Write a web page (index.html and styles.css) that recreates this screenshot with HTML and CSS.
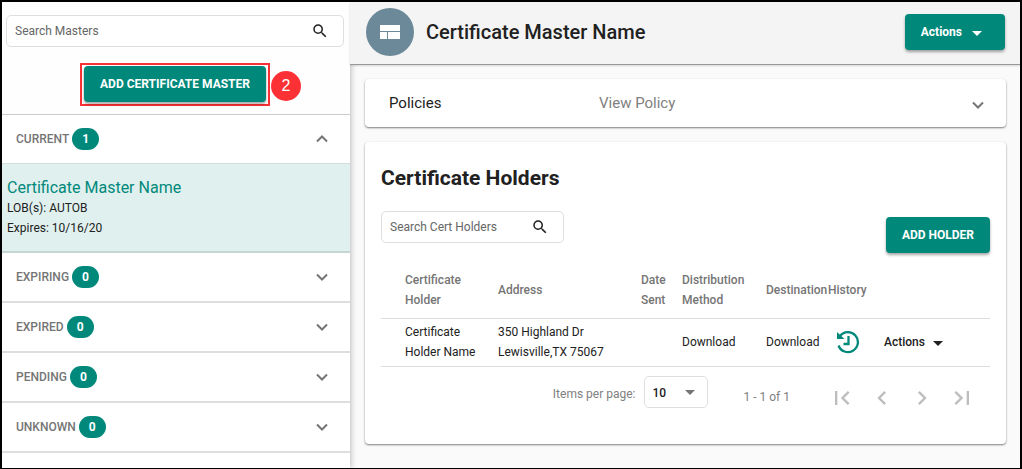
FILE: index.html
```html
<!DOCTYPE html>
<html lang="en">
<head>
<meta charset="utf-8">
<meta name="viewport" content="width=device-width, initial-scale=1">
<title>Certificate Master Name</title>
<link rel="stylesheet" href="styles.css">
</head>
<body>
<div class="app">
  <aside class="sidebar">
    <div class="sidebar-top">
      <label class="search">
        <input class="search-input" type="text" placeholder="Search Masters" aria-label="Search Masters">
        <svg class="search-icon" viewBox="0 0 24 24"><path d="M15.500 14h-.79l-.28-.27A6.470 6.470 0 0 0 16 9.500 6.500 6.500 0 1 0 9.500 16c1.610 0 3.090-.59 4.230-1.570l.27.28v.79l5 4.990L20.490 19l-4.990-5zm-6 0C7.010 14 5 11.990 5 9.500S7.010 5 9.500 5 14 7.010 14 9.500 11.990 14 9.500 14z"/></svg>
      </label>
      <div class="callout">
        <button class="btn" type="button">ADD CERTIFICATE MASTER</button>
        <span class="callout-number">2</span>
      </div>
    </div>
    <section class="group group-open">
      <button class="group-header" type="button" aria-expanded="true">
        <span>CURRENT</span><span class="count">1</span>
        <svg class="chevron" viewBox="0 0 12 8"><path d="M1 6.500 6 1.500l5 5"/></svg>
      </button>
      <a class="master" href="#">
        <span class="master-name">Certificate Master Name</span>
        <span>LOB(s): AUTOB</span>
        <span>Expires: 10/16/20</span>
      </a>
    </section>
    <section class="group">
      <button class="group-header" type="button" aria-expanded="false">
        <span>EXPIRING</span><span class="count">0</span>
        <svg class="chevron" viewBox="0 0 12 8"><path d="M1 1.500l5 5 5-5"/></svg>
      </button>
    </section>
    <section class="group">
      <button class="group-header" type="button" aria-expanded="false">
        <span>EXPIRED</span><span class="count">0</span>
        <svg class="chevron" viewBox="0 0 12 8"><path d="M1 1.500l5 5 5-5"/></svg>
      </button>
    </section>
    <section class="group">
      <button class="group-header" type="button" aria-expanded="false">
        <span>PENDING</span><span class="count">0</span>
        <svg class="chevron" viewBox="0 0 12 8"><path d="M1 1.500l5 5 5-5"/></svg>
      </button>
    </section>
    <section class="group">
      <button class="group-header" type="button" aria-expanded="false">
        <span>UNKNOWN</span><span class="count">0</span>
        <svg class="chevron" viewBox="0 0 12 8"><path d="M1 1.500l5 5 5-5"/></svg>
      </button>
    </section>
  </aside>

  <main class="main">
    <header class="page-header">
      <span class="avatar">
        <svg class="avatar-icon" viewBox="0 0 20 14"><path d="M0 0h20v6H0zM0 7h7v7H0zM8 7h12v7H8z"/></svg>
      </span>
      <h1 class="page-title">Certificate Master Name</h1>
      <button class="btn btn-menu" type="button">Actions
        <svg class="caret" viewBox="0 0 10 5"><path d="M0 0h10L5 5z"/></svg>
      </button>
    </header>

    <div class="content">
      <section class="card policies">
        <span class="policies-label">Policies</span>
        <a class="policies-link" href="#">View Policy</a>
        <svg class="chevron" viewBox="0 0 12 8"><path d="M1 1.500l5 5 5-5"/></svg>
      </section>

      <section class="card holders">
        <h2 class="card-title">Certificate Holders</h2>
        <div class="toolbar">
          <label class="search search-small">
            <input class="search-input" type="text" placeholder="Search Cert Holders" aria-label="Search Cert Holders">
            <svg class="search-icon" viewBox="0 0 24 24"><path d="M15.500 14h-.79l-.28-.27A6.470 6.470 0 0 0 16 9.500 6.500 6.500 0 1 0 9.500 16c1.610 0 3.090-.59 4.230-1.570l.27.28v.79l5 4.990L20.490 19l-4.990-5zm-6 0C7.010 14 5 11.990 5 9.500S7.010 5 9.500 5 14 7.010 14 9.500 11.990 14 9.500 14z"/></svg>
          </label>
          <button class="btn" type="button">ADD HOLDER</button>
        </div>
        <table class="table">
          <colgroup>
            <col class="col-holder"><col><col class="col-date"><col class="col-method"><col class="col-destination"><col class="col-history"><col class="col-actions">
          </colgroup>
          <thead>
            <tr>
              <th>Certificate<br>Holder</th>
              <th>Address</th>
              <th>Date<br>Sent</th>
              <th>Distribution<br>Method</th>
              <th>Destination</th>
              <th>History</th>
              <th></th>
            </tr>
          </thead>
          <tbody>
            <tr>
              <td>Certificate<br>Holder Name</td>
              <td>350 Highland Dr<br>Lewisville,TX 75067</td>
              <td></td>
              <td>Download</td>
              <td>Download</td>
              <td class="history-cell">
                <button class="icon-btn" type="button" aria-label="History">
                  <svg class="history-icon" viewBox="0 0 24 24"><path class="stroke" d="M4 6A10 10 0 1 1 2.500 15.500M12.500 6v8H7.500"/><path d="M1 2v7h7.500z"/></svg>
                </button>
              </td>
              <td>
                <button class="row-menu" type="button">Actions
                  <svg class="caret" viewBox="0 0 10 5"><path d="M0 0h10L5 5z"/></svg>
                </button>
              </td>
            </tr>
          </tbody>
        </table>
        <div class="paginator">
          <label for="page-size">Items per page:</label>
          <div class="select">
            <select id="page-size" class="select-input"><option>10</option></select>
            <svg class="caret" viewBox="0 0 10 5"><path d="M0 0h10L5 5z"/></svg>
          </div>
          <span class="range">1 - 1 of 1</span>
          <div class="pages">
            <button class="page-btn" type="button" aria-label="First page" disabled><svg viewBox="0 0 24 24"><path d="M18.410 16.590 13.820 12l4.590-4.590L17 6l-6 6 6 6zM6 6h2v12H6z"/></svg></button>
            <button class="page-btn" type="button" aria-label="Previous page" disabled><svg viewBox="0 0 24 24"><path d="M15.410 7.410 14 6l-6 6 6 6 1.410-1.410L10.830 12z"/></svg></button>
            <button class="page-btn" type="button" aria-label="Next page" disabled><svg viewBox="0 0 24 24"><path d="M10 6 8.590 7.410 13.170 12l-4.580 4.590L10 18l6-6z"/></svg></button>
            <button class="page-btn" type="button" aria-label="Last page" disabled><svg viewBox="0 0 24 24"><path d="M5.590 7.410 10.180 12l-4.590 4.590L7 18l6-6-6-6zM16 6h2v12h-2z"/></svg></button>
          </div>
        </div>
      </section>
    </div>
  </main>
</div>
</body>
</html>
```
FILE: styles.css
```css
* { box-sizing: border-box; }

body {
  margin: 0;
  color: #212121;
  background: #fafafa;
  font: 400 12px/20px Roboto, "Open Sans", sans-serif;
}

button, input, select {
  margin: 0;
  padding: 0;
  border: 0;
  background: none;
  color: inherit;
  font: inherit;
}

button { cursor: pointer; }
a { color: inherit; text-decoration: none; }
svg { display: block; fill: currentColor; }

.app {
  display: flex;
  min-height: 100vh;
  border: 2px solid #000;
}

/* Sidebar */
.sidebar {
  flex: 0 0 348px;
  background: #fff;
  box-shadow: 1px 0 6px rgba(0, 0, 0, 0.25);
}

.sidebar-top {
  display: flex;
  flex-direction: column;
  align-items: center;
  gap: 16px;
  padding: 13px 6px 8px 4px;
  border-bottom: 1px solid #ccc;
  background: #fefefe;
}

.search {
  display: flex;
  align-items: center;
  width: 100%;
  height: 32px;
  padding: 0 14px 0 8px;
  border: 1px solid #dedede;
  border-radius: 5px;
  background: #fff;
}

.search-small { width: 183px; }

.search-input {
  flex: 1;
  min-width: 0;
  outline: 0;
}

.search-input::placeholder { color: #666; opacity: 1; }

.search-icon {
  width: 18px;
  height: 18px;
  color: #212121;
}

.callout {
  position: relative;
  padding: 1px 2px 2px;
  border: 2px solid #f93135;
}

.callout-number {
  position: absolute;
  top: 6px;
  left: 100%;
  width: 30px;
  margin-left: 3px;
  border-radius: 50%;
  background: #fc3136;
  color: #fff;
  font: 16px/30px "Liberation Sans", sans-serif;
  text-align: center;
}

.btn {
  height: 36px;
  padding: 0 16px;
  border-radius: 4px;
  background: #00897b;
  box-shadow: 0 2px 3px rgba(0, 0, 0, 0.35);
  color: #fff;
  font-weight: 700;
  white-space: nowrap;
}

.group { border-bottom: 2px solid #dedede; }

.group-header {
  display: flex;
  align-items: center;
  gap: 3px;
  width: 100%;
  height: 48px;
  padding: 0 22px 0 14px;
  color: #757575;
  font-weight: 500;
}

.count {
  width: 27px;
  border-radius: 11px;
  background: #00897b;
  color: #fff;
  font-weight: 700;
  line-height: 22px;
}

.chevron {
  width: 12px;
  height: 8px;
  margin-left: auto;
  color: #757575;
  fill: none;
  stroke: currentColor;
  stroke-width: 2;
}

.group-open { border-color: #c5d6d4; }

.master {
  display: flex;
  flex-direction: column;
  padding: 14px 5px 13px;
  border-top: 1px solid #d3dddc;
  background: #e0f0ee;
}

.master-name {
  color: #00897b;
  font-size: 16px;
}

/* Main area */
.main { flex: 1; min-width: 0; }

.page-header {
  display: flex;
  align-items: center;
  gap: 12px;
  height: 63px;
  padding: 0 15px 2px 16px;
  border-bottom: 1px solid #999;
  background: #f4f4f4;
  box-shadow: 0 1px 2px rgba(0, 0, 0, 0.15);
}

.avatar {
  display: grid;
  place-items: center;
  width: 48px;
  height: 48px;
  border-radius: 50%;
  background: #6b8998;
  color: #fff;
}

.avatar-icon { width: 20px; height: 14px; }

.page-title {
  flex: 1;
  margin: 0;
  font-size: 20px;
  font-weight: 500;
}

.btn-menu, .row-menu {
  display: flex;
  align-items: center;
  gap: 10px;
}

.btn-menu { padding-right: 23px; }
.row-menu { gap: 8px; font-weight: 500; }
.caret { width: 10px; height: 5px; margin-top: 2px; }

.content {
  display: flex;
  flex-direction: column;
  gap: 15px;
  padding: 14px 14px 24px 15px;
}

.card {
  border-radius: 4px;
  background: #fff;
  box-shadow: 0 1px 2px rgba(0, 0, 0, 0.5);
}

.policies {
  display: flex;
  align-items: center;
  height: 48px;
  padding: 0 22px 0 24px;
  font-size: 15px;
}

.policies-label { flex: 0 1 210px; }
.policies-link { color: #808080; }
.policies .chevron { margin-top: 4px; }

.holders { padding: 24px 16px 26px; }

.card-title {
  margin: 0 0 21px;
  font-size: 21px;
  font-weight: 700;
  line-height: 24px;
}

.toolbar {
  display: flex;
  justify-content: space-between;
  height: 42px;
}

.toolbar .btn { align-self: flex-end; }

.table {
  width: 100%;
  margin-top: 8px;
  border-collapse: collapse;
  table-layout: fixed;
}

.col-holder { width: 117px; }
.col-date { width: 41px; }
.col-method { width: 84px; }
.col-destination { width: 62px; }
.col-history { width: 56px; }
.col-actions { width: 106px; }

.table th, .table td {
  height: 48px;
  padding: 0;
  border-bottom: 1px solid #dedede;
  text-align: left;
}

.table th {
  height: 57px;
  padding-top: 2px;
  color: #757575;
  font-weight: 500;
}

.table th:first-child, .table td:first-child { padding-left: 24px; }
.history-cell .icon-btn { display: block; margin-left: 8px; color: #00897b; }
.history-icon { width: 24px; height: 24px; }

.history-icon .stroke {
  fill: none;
  stroke: currentColor;
  stroke-width: 2.3;
}

.paginator {
  display: flex;
  align-items: flex-start;
  justify-content: flex-end;
  padding: 9px 8px 0 0;
  color: #808080;
  line-height: 36px;
}

.select {
  display: flex;
  align-items: center;
  position: relative;
  width: 64px;
  height: 32px;
  margin: 0 36px 0 8px;
  border: 1px solid #dedede;
  border-radius: 5px;
}

.select-input {
  appearance: none;
  width: 100%;
  height: 100%;
  padding: 2px 0 0 8px;
  color: #212121;
  font-weight: 500;
  line-height: 20px;
}

.select .caret {
  position: absolute;
  top: 11px;
  right: 12px;
  color: #757575;
  pointer-events: none;
}

.range { line-height: 42px; }
.pages { display: flex; margin: 2px 0 0 32px; }

.page-btn {
  display: grid;
  place-items: center;
  width: 40px;
  height: 40px;
  color: #bdbdbd;
}

.page-btn svg { width: 28px; height: 28px; }
```
